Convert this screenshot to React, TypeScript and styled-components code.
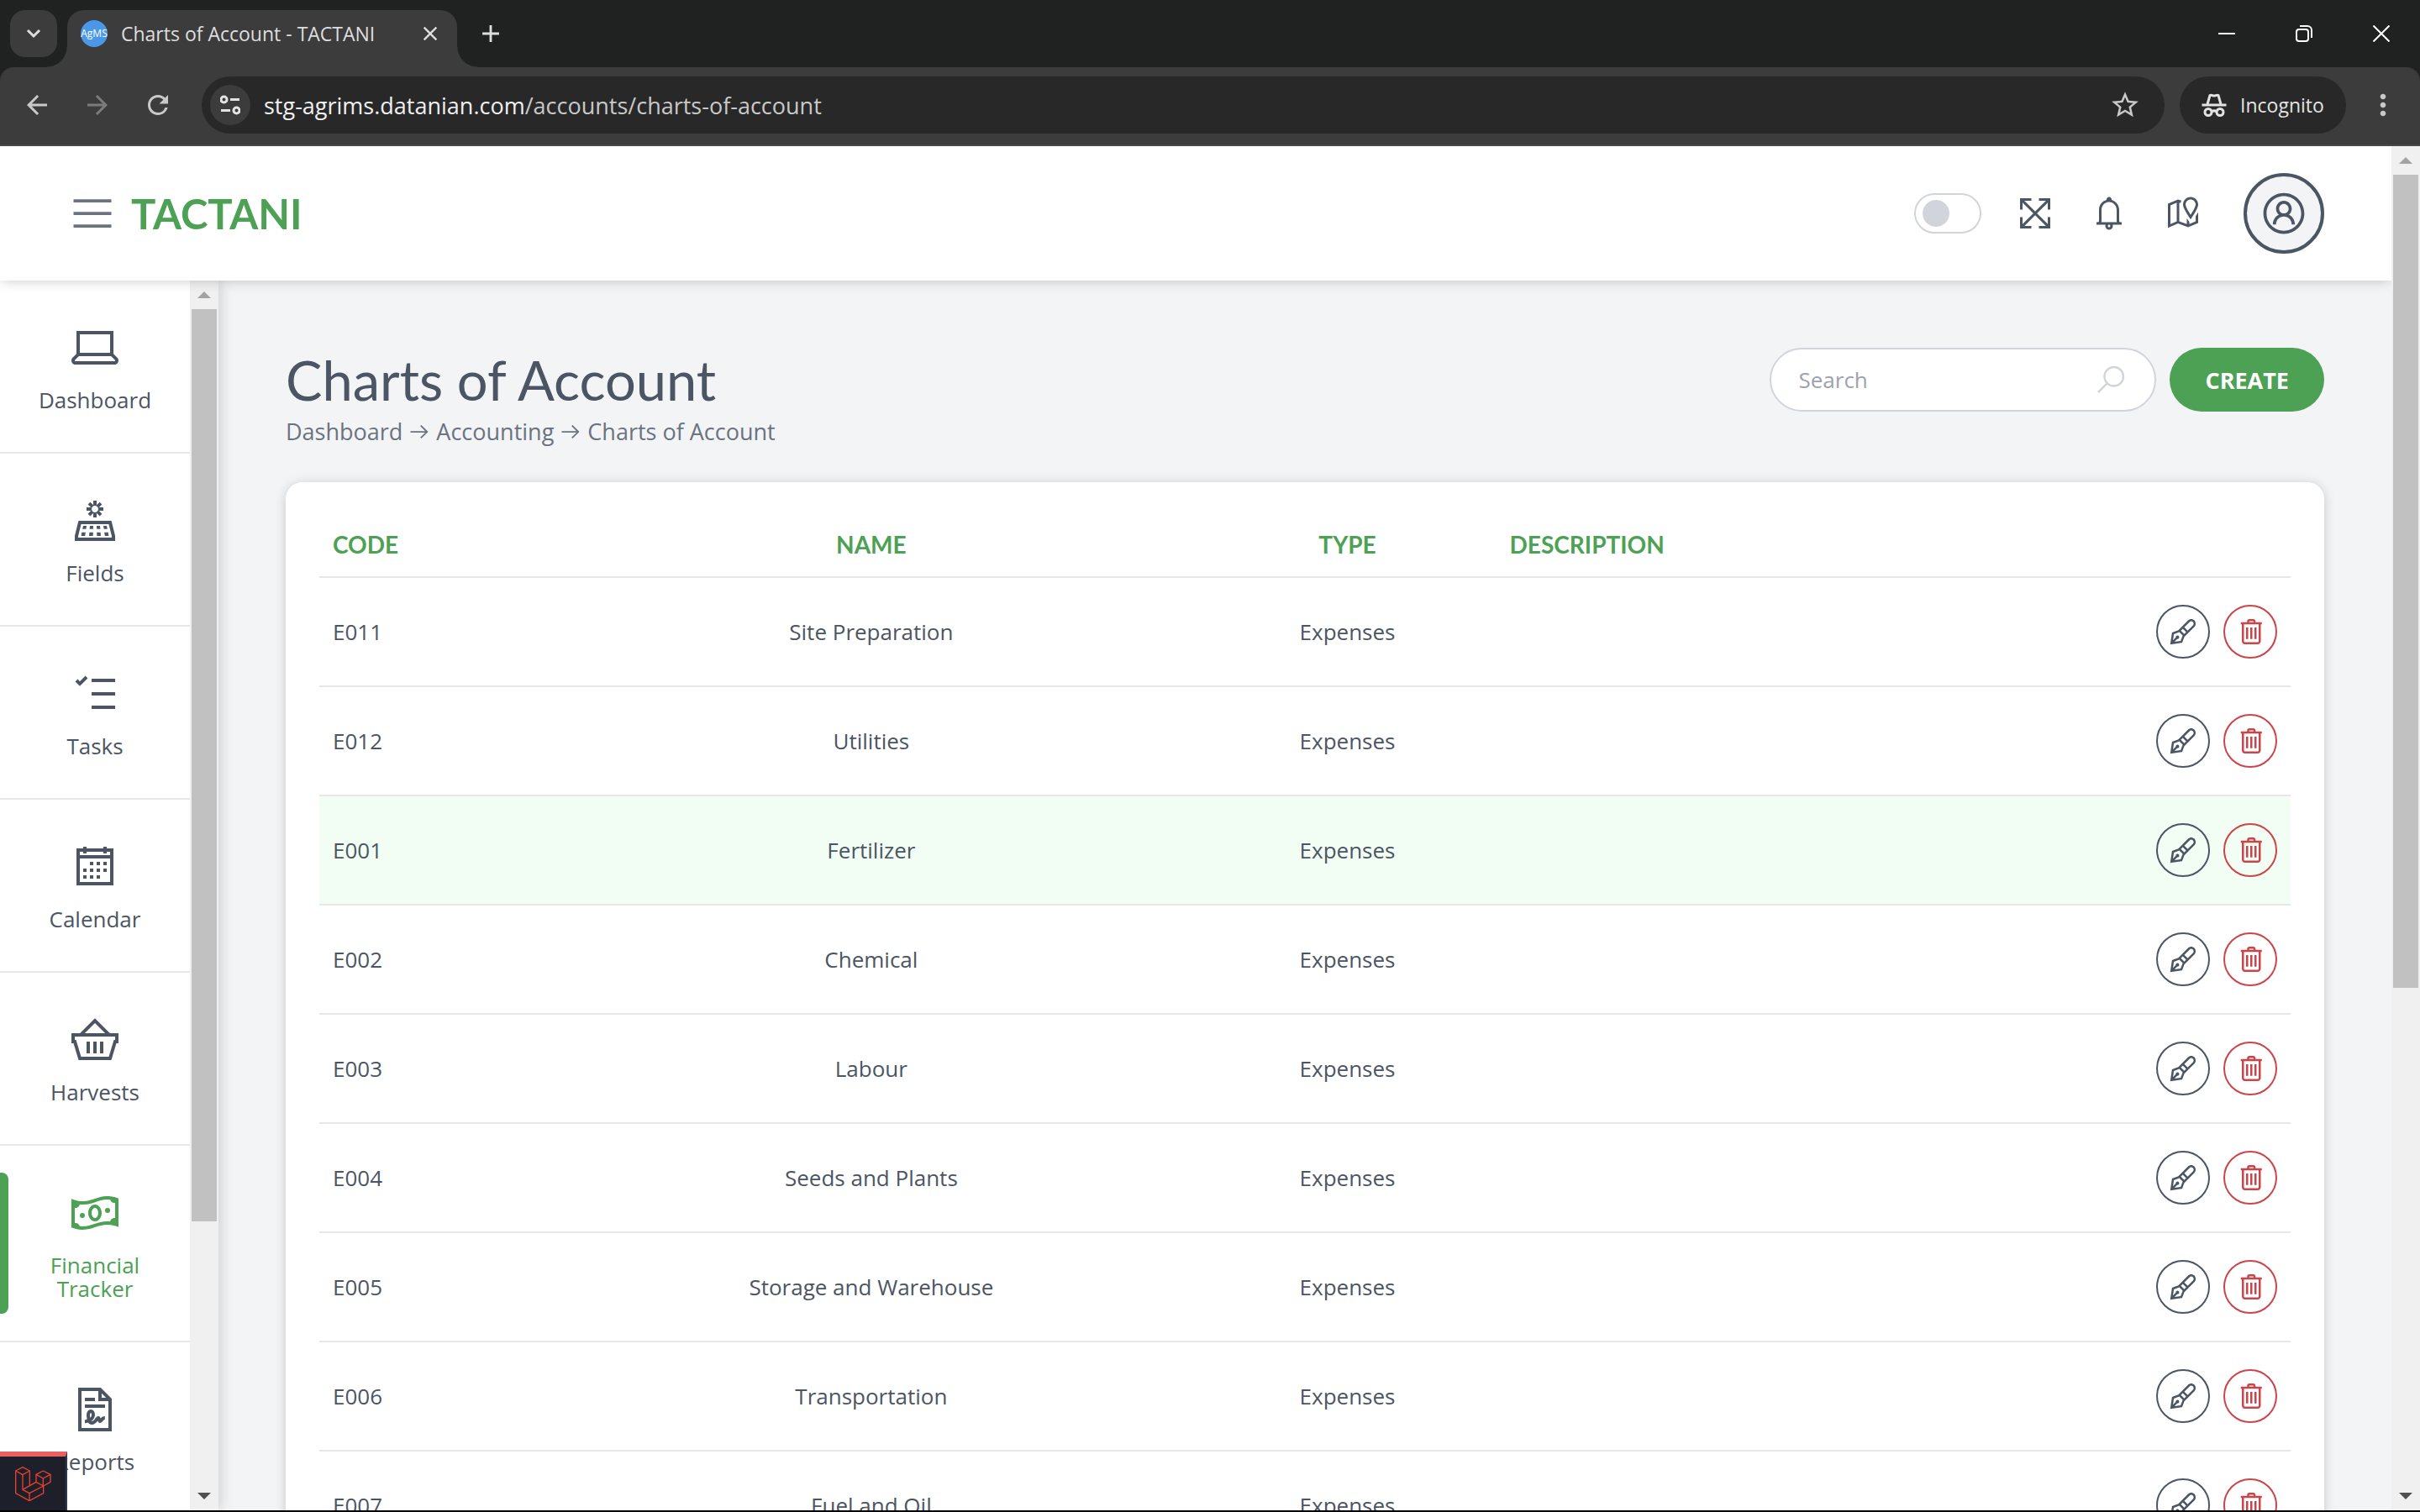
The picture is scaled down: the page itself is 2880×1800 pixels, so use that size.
import React from "react";
import styled, { createGlobalStyle, css } from "styled-components";
import {
  LiaArrowRightSolid,
  LiaBarsSolid,
  LiaBell,
  LiaCalendar,
  LiaExpandArrowsAltSolid,
  LiaFileContractSolid,
  LiaLaptopSolid,
  LiaMapMarkedSolid,
  LiaMoneyBillWaveSolid,
  LiaPenFancySolid,
  LiaSearchSolid,
  LiaShoppingBasketSolid,
  LiaSolarPanelSolid,
  LiaTasksSolid,
  LiaTrashAlt,
  LiaUserCircle,
} from "react-icons/lia";
import {
  MdAdd,
  MdArrowBack,
  MdArrowForward,
  MdClose,
  MdMoreVert,
  MdRefresh,
  MdStarBorder,
} from "react-icons/md";

const color = {
  green: "#4ca154",
  red: "#cb444a",
  ink: "#4b5563",
  muted: "#6b7280",
  placeholder: "#9ca3af",
  outline: "#d1d5db",
  line: "#e5e7eb",
  page: "#f3f4f6",
  strip: "#202221",
  toolbar: "#3c3c3c",
  field: "#282828",
};

const bodyFont = `"Open Sans", "Noto Sans", sans-serif`;
const displayFont = `Lato, "Open Sans", sans-serif`;

const GlobalStyle = createGlobalStyle`
  *, *::before, *::after { box-sizing: border-box; }
  body { margin: 0; font-family: ${bodyFont}; font-size: 26px; color: ${color.ink}; }
  button, input { font: inherit; color: inherit; margin: 0; }
  button { border: 0; padding: 0; background: none; cursor: pointer; }
  a { color: inherit; text-decoration: none; }
  svg { display: block; flex: none; }
`;

const Window = styled.div`
  display: flex;
  flex-direction: column;
  height: 100vh;
  overflow: hidden;
  border-bottom: 2px solid #000;
  background: ${color.page};
`;

/* ---------- browser frame ---------- */

const TabStrip = styled.div`
  display: flex;
  align-items: flex-end;
  height: 80px;
  padding-left: 12px;
  gap: 12px;
  background: ${color.strip};
  color: #dedede;
`;

const TabSearch = styled.button`
  display: grid;
  place-items: center;
  width: 56px;
  height: 56px;
  margin-bottom: 12px;
  border-radius: 18px;
  background: ${color.toolbar};
`;

const Tab = styled.div`
  position: relative;
  display: flex;
  align-items: center;
  width: 464px;
  height: 68px;
  padding: 0 18px 12px 16px;
  gap: 16px;
  border-radius: 20px 20px 0 0;
  background: ${color.toolbar};
  font-size: 23px;

  &::before,
  &::after {
    content: "";
    position: absolute;
    bottom: 0;
    width: 24px;
    height: 24px;
  }
  &::before {
    right: 100%;
    background: radial-gradient(circle at 0 0, transparent 23px, ${color.toolbar} 24px);
  }
  &::after {
    left: 100%;
    background: radial-gradient(circle at 100% 0, transparent 23px, ${color.toolbar} 24px);
  }
`;

const Favicon = styled.span`
  display: grid;
  place-items: center;
  width: 32px;
  height: 32px;
  border-radius: 50%;
  background: #4a98e8;
  color: #fff;
  font-size: 12px;
  line-height: 32px;
`;

const TabTitle = styled.span`
  flex: 1;
  white-space: nowrap;
`;

const StripButton = styled.button`
  display: grid;
  place-items: center;
  width: 56px;
  height: 56px;
  margin-bottom: 12px;
`;

const TabClose = styled.button`
  display: grid;
  place-items: center;
  width: 28px;
  height: 28px;
`;

const WindowControls = styled.div`
  display: flex;
  align-self: stretch;
  align-items: center;
  margin-left: auto;
  color: #fff;
`;

const WindowButton = styled.button`
  display: grid;
  place-items: center;
  width: 92px;
  height: 80px;
`;

const AddressBarBack = styled.div`
  background: ${color.strip};
`;

const AddressBar = styled.div`
  display: flex;
  align-items: center;
  height: 94px;
  padding: 0 24px 2px 8px;
  border-bottom: 2px solid #484848;
  border-radius: 16px 16px 0 0;
  background: ${color.toolbar};
  color: #c9c9c9;
`;

const NavButton = styled.button<{ $dim?: boolean }>`
  display: grid;
  place-items: center;
  width: 72px;
  height: 68px;
  opacity: ${(p) => (p.$dim ? 0.45 : 1)};
`;

const UrlField = styled.div`
  display: flex;
  flex: 1;
  align-items: center;
  height: 68px;
  margin: 0 18px 0 16px;
  padding: 0 28px 0 10px;
  gap: 16px;
  border-radius: 34px;
  background: ${color.field};
`;

const SiteInfo = styled.button`
  display: grid;
  place-items: center;
  width: 48px;
  height: 48px;
  border-radius: 50%;
  background: ${color.toolbar};
`;

const Url = styled.span`
  flex: 1;
  font-size: 27px;
  white-space: nowrap;
`;

const Host = styled.span`
  color: #f0f0f0;
`;

const Incognito = styled.button`
  display: flex;
  align-items: center;
  justify-content: center;
  width: 198px;
  height: 68px;
  gap: 16px;
  margin-right: 24px;
  border-radius: 34px;
  background: ${color.field};
  color: #e3e3e3;
  font-size: 23px;
`;

/* ---------- scroll bars ---------- */

const Rail = styled.div`
  display: flex;
  flex-direction: column;
  width: 34px;
  background: #f0f0f0;
`;

const RailArrow = styled.span<{ $down?: boolean }>`
  display: grid;
  place-items: center;
  height: 34px;

  &::before {
    content: "";
    width: 16px;
    height: 8px;
    background: ${(p) => (p.$down ? "#505050" : "#a3a3a3")};
    clip-path: ${(p) =>
      p.$down ? "polygon(0 0, 100% 0, 50% 100%)" : "polygon(50% 0, 100% 100%, 0 100%)"};
  }
`;

const RailTrack = styled.div`
  flex: 1;
  padding: 0 2px;
`;

const RailThumb = styled.div`
  background: #c1c1c1;
`;

function ScrollRail({ visible, total }: { visible: number; total: number }) {
  return (
    <Rail aria-hidden="true">
      <RailArrow />
      <RailTrack>
        <RailThumb style={{ height: `${(visible / total) * 100}%` }} />
      </RailTrack>
      <RailArrow $down />
    </Rail>
  );
}

/* ---------- page ---------- */

const Viewport = styled.div`
  display: flex;
  flex: 1;
  min-height: 0;
`;

const Page = styled.div`
  display: flex;
  flex: 1;
  flex-direction: column;
  min-width: 0;
  overflow: hidden;
`;

const Header = styled.header`
  position: relative;
  z-index: 3;
  display: flex;
  flex: none;
  align-items: center;
  height: 160px;
  padding: 0 80px;
  background: #fff;
  box-shadow: 0 2px 14px -2px rgba(0, 0, 0, 0.22);
`;

const MenuButton = styled.button`
  margin-right: 16px;
  color: ${color.muted};
`;

const Brand = styled.a`
  color: ${color.green};
  font-family: ${displayFont};
  font-size: 49px;
  font-weight: 700;
  line-height: 60px;
`;

const HeaderTools = styled.div`
  display: flex;
  align-items: center;
  gap: 40px;
  margin-left: auto;
`;

const ThemeToggle = styled.input`
  appearance: none;
  display: flex;
  align-items: center;
  width: 80px;
  height: 48px;
  padding: 0 8px;
  border: 2px solid ${color.outline};
  border-radius: 24px;
  background: #fff;

  &::before {
    content: "";
    width: 32px;
    height: 32px;
    border-radius: 50%;
    background: ${color.outline};
  }
`;

const ToolButton = styled.button`
  display: grid;
  place-items: center;
`;

const Avatar = styled.button`
  display: grid;
  place-items: center;
  width: 96px;
  height: 96px;
  margin-left: 8px;
  border: 4px solid ${color.ink};
  border-radius: 50%;
  background: ${color.page};
`;

const Columns = styled.div`
  display: flex;
  flex: 1;
  min-height: 0;
`;

const Sidebar = styled.aside`
  position: relative;
  z-index: 2;
  display: flex;
  flex: none;
  width: 260px;
  background: #fff;
  box-shadow: 0 0 18px rgba(0, 0, 0, 0.2);
`;

const Menu = styled.nav`
  flex: 1;
  overflow: hidden;
`;

const MenuLink = styled.a<{ $active?: boolean }>`
  position: relative;
  display: flex;
  flex-direction: column;
  align-items: center;
  gap: 16px;
  padding: 48px 32px;
  border-bottom: 2px solid ${color.line};
  line-height: 28px;
  text-align: center;

  ${(p) =>
    p.$active &&
    css`
      color: ${color.green};

      &::before {
        content: "";
        position: absolute;
        top: 32px;
        bottom: 32px;
        left: 0;
        width: 10px;
        border-radius: 0 8px 8px 0;
        background: ${color.green};
      }
    `}
`;

const Main = styled.main`
  flex: 1;
  min-width: 0;
  padding: 80px 80px 0;
  overflow: hidden;
`;

const TitleBar = styled.div`
  display: flex;
  align-items: flex-start;
  justify-content: space-between;
  margin-bottom: 40px;
`;

const Title = styled.h1`
  margin: 0 0 4px;
  font-family: ${displayFont};
  font-size: 65px;
  font-weight: 400;
  line-height: 76px;
`;

const Crumbs = styled.nav`
  display: flex;
  align-items: center;
  gap: 6px;
  color: ${color.muted};
  font-size: 27px;
  line-height: 40px;
`;

const Actions = styled.div`
  display: flex;
  gap: 16px;
`;

const SearchBox = styled.label`
  display: flex;
  align-items: center;
  width: 460px;
  height: 76px;
  padding: 0 32px;
  border: 2px solid ${color.outline};
  border-radius: 38px;
  background: #fff;
  color: ${color.outline};
`;

const SearchInput = styled.input`
  flex: 1;
  min-width: 0;
  padding: 0;
  border: 0;
  outline: 0;
  background: none;
  color: ${color.ink};

  &::placeholder {
    color: ${color.placeholder};
    opacity: 1;
  }
`;

const CreateButton = styled.button`
  height: 76px;
  padding: 0 42px;
  border-radius: 38px;
  background: ${color.green};
  color: #fff;
  font-size: 27px;
  font-weight: 700;
`;

const Card = styled.section`
  padding: 40px;
  border-radius: 20px;
  background: #fff;
  box-shadow: 0 2px 14px rgba(0, 0, 0, 0.18);
`;

const Table = styled.table`
  width: 100%;
  table-layout: fixed;
  border-collapse: separate;
  border-spacing: 0;
`;

const Col = styled.col<{ $width?: string }>`
  width: ${(p) => p.$width ?? "auto"};
`;

const Th = styled.th<{ $left?: boolean }>`
  padding: 14px 16px 18px;
  border-bottom: 2px solid ${color.line};
  color: ${color.green};
  font-family: ${displayFont};
  font-size: 28px;
  font-weight: 700;
  line-height: 40px;
  text-align: ${(p) => (p.$left ? "left" : "center")};
`;

const Td = styled.td<{ $left?: boolean }>`
  padding: 32px 16px;
  border-bottom: 2px solid ${color.line};
  line-height: 40px;
  text-align: ${(p) => (p.$left ? "left" : "center")};
`;

const Tr = styled.tr<{ $highlighted?: boolean }>`
  background: ${(p) => (p.$highlighted ? "#f2fdf4" : "transparent")};
`;

const RowActions = styled.div`
  display: flex;
  justify-content: flex-end;
  gap: 16px;
`;

const RoundButton = styled.button<{ $danger?: boolean }>`
  display: grid;
  place-items: center;
  width: 64px;
  height: 64px;
  border: 2px solid currentColor;
  border-radius: 50%;
  color: ${(p) => (p.$danger ? color.red : color.ink)};
`;

const DebugBadge = styled.button`
  position: absolute;
  bottom: 2px;
  left: 0;
  z-index: 4;
  display: grid;
  place-items: center;
  width: 80px;
  height: 70px;
  border-top: 6px solid #eb5f60;
  border-right: 2px solid #2d3748;
  background: #1d202b;
`;

/* ---------- drawings ---------- */

const ChevronIcon = () => (
  <svg width="18" height="12" viewBox="0 0 18 12" fill="none" stroke="currentColor" strokeWidth="3">
    <path d="M2 2l7 7 7-7" />
  </svg>
);

const MinimizeIcon = () => (
  <svg width="20" height="20" viewBox="0 0 20 20" stroke="currentColor" strokeWidth="2">
    <path d="M0 10h20" />
  </svg>
);

const RestoreIcon = () => (
  <svg width="20" height="20" viewBox="0 0 20 20" fill="none" stroke="currentColor" strokeWidth="2">
    <rect x="1" y="5" width="14" height="14" rx="3" />
    <path d="M5 1h9a5 5 0 0 1 5 5v9" />
  </svg>
);

const CloseWindowIcon = () => (
  <svg width="20" height="20" viewBox="0 0 20 20" fill="none" stroke="currentColor" strokeWidth="2">
    <path d="M0.500 0.500l19 19M19.500 0.500l-19 19" />
  </svg>
);

const SiteInfoIcon = () => (
  <svg width="24" height="24" viewBox="0 0 24 24" fill="none" stroke="#e3e3e3" strokeWidth="3">
    <circle cx="4.500" cy="5.500" r="3.500" />
    <path d="M12 5.500h11M1 18.500h11" />
    <circle cx="19.500" cy="18.500" r="3.500" />
  </svg>
);

const IncognitoIcon = () => (
  <svg width="30" height="28" viewBox="0 0 30 28" fill="none" stroke="currentColor" strokeWidth="3">
    <path d="M7 13L10 2.500C12 1.500 13 3 15 3S18 1.500 20 2.500L23 13" />
    <path d="M0.500 14h29" />
    <circle cx="8" cy="22.500" r="4" />
    <circle cx="22" cy="22.500" r="4" />
    <path d="M12 22c2-1.500 4-1.500 6 0" />
  </svg>
);

const LaravelIcon = () => (
  <svg
    width="44"
    height="42"
    viewBox="0 0 132 126"
    fill="none"
    stroke="#e5422f"
    strokeWidth="4"
    strokeLinejoin="round"
  >
    <path d="M30 5L55 18L30 32L5 18Z" />
    <path d="M5 18V98L54 125L104 98V72L54 98L30 85V32" />
    <path d="M54 98V125M55 18V71M30 85L78 58" />
    <path d="M103 18L129 31L103 45L78 31Z" />
    <path d="M78 31V58L104 72L129 58V31M103 45V72" />
  </svg>
);

/* ---------- content ---------- */

const menu = [
  { label: "Dashboard", icon: LiaLaptopSolid },
  { label: "Fields", icon: LiaSolarPanelSolid },
  { label: "Tasks", icon: LiaTasksSolid },
  { label: "Calendar", icon: LiaCalendar },
  { label: "Harvests", icon: LiaShoppingBasketSolid },
  { label: "Financial Tracker", icon: LiaMoneyBillWaveSolid, active: true },
  { label: "Reports", icon: LiaFileContractSolid },
];

const accounts = [
  { code: "E011", name: "Site Preparation" },
  { code: "E012", name: "Utilities" },
  { code: "E001", name: "Fertilizer", highlighted: true },
  { code: "E002", name: "Chemical" },
  { code: "E003", name: "Labour" },
  { code: "E004", name: "Seeds and Plants" },
  { code: "E005", name: "Storage and Warehouse" },
  { code: "E006", name: "Transportation" },
  { code: "E007", name: "Fuel and Oil" },
];

function BrowserFrame() {
  return (
    <>
      <TabStrip>
        <TabSearch aria-label="Search tabs">
          <ChevronIcon />
        </TabSearch>
        <Tab>
          <Favicon>AgMS</Favicon>
          <TabTitle>Charts of Account - TACTANI</TabTitle>
          <TabClose aria-label="Close tab">
            <MdClose size={28} />
          </TabClose>
        </Tab>
        <StripButton aria-label="New tab">
          <MdAdd size={34} />
        </StripButton>
        <WindowControls>
          <WindowButton aria-label="Minimize">
            <MinimizeIcon />
          </WindowButton>
          <WindowButton aria-label="Restore">
            <RestoreIcon />
          </WindowButton>
          <WindowButton aria-label="Close window">
            <CloseWindowIcon />
          </WindowButton>
        </WindowControls>
      </TabStrip>
      <AddressBarBack>
        <AddressBar>
          <NavButton aria-label="Back">
            <MdArrowBack size={36} />
          </NavButton>
          <NavButton aria-label="Forward" $dim>
            <MdArrowForward size={36} />
          </NavButton>
          <NavButton aria-label="Reload">
            <MdRefresh size={36} />
          </NavButton>
          <UrlField>
            <SiteInfo aria-label="Site information">
              <SiteInfoIcon />
            </SiteInfo>
            <Url>
              <Host>stg-agrims.datanian.com</Host>/accounts/charts-of-account
            </Url>
            <MdStarBorder size={38} />
          </UrlField>
          <Incognito>
            <IncognitoIcon />
            Incognito
          </Incognito>
          <MdMoreVert size={40} />
        </AddressBar>
      </AddressBarBack>
    </>
  );
}

function AccountsTable() {
  return (
    <Table>
      <colgroup>
        <Col $width="7%" />
        <Col $width="42%" />
        <Col $width="148px" />
        <Col $width="18%" />
        <Col />
      </colgroup>
      <thead>
        <tr>
          <Th $left>CODE</Th>
          <Th>NAME</Th>
          <Th>TYPE</Th>
          <Th>DESCRIPTION</Th>
          <Th aria-label="Actions" />
        </tr>
      </thead>
      <tbody>
        {accounts.map((account) => (
          <Tr key={account.code} $highlighted={account.highlighted}>
            <Td $left>{account.code}</Td>
            <Td>{account.name}</Td>
            <Td>Expenses</Td>
            <Td />
            <Td>
              <RowActions>
                <RoundButton aria-label={`Edit ${account.name}`}>
                  <LiaPenFancySolid size={40} />
                </RoundButton>
                <RoundButton aria-label={`Delete ${account.name}`} $danger>
                  <LiaTrashAlt size={40} />
                </RoundButton>
              </RowActions>
            </Td>
          </Tr>
        ))}
      </tbody>
    </Table>
  );
}

export default function App() {
  return (
    <Window>
      <GlobalStyle />
      <BrowserFrame />
      <Viewport>
        <Page>
          <Header>
            <MenuButton aria-label="Toggle menu">
              <LiaBarsSolid size={60} />
            </MenuButton>
            <Brand href="#">TACTANI</Brand>
            <HeaderTools>
              <ThemeToggle type="checkbox" aria-label="Dark mode" />
              <ToolButton aria-label="Full screen">
                <LiaExpandArrowsAltSolid size={48} />
              </ToolButton>
              <ToolButton aria-label="Notifications">
                <LiaBell size={48} />
              </ToolButton>
              <ToolButton aria-label="Map">
                <LiaMapMarkedSolid size={48} />
              </ToolButton>
              <Avatar aria-label="Account">
                <LiaUserCircle size={60} />
              </Avatar>
            </HeaderTools>
          </Header>
          <Columns>
            <Sidebar>
              <Menu>
                {menu.map(({ label, icon: Icon, active }) => (
                  <MenuLink key={label} href="#" $active={active}>
                    <Icon size={64} />
                    {label}
                  </MenuLink>
                ))}
              </Menu>
              <ScrollRail visible={1464} total={1882} />
            </Sidebar>
            <Main>
              <TitleBar>
                <div>
                  <Title>Charts of Account</Title>
                  <Crumbs aria-label="Breadcrumb">
                    <a href="#">Dashboard</a>
                    <LiaArrowRightSolid size={28} />
                    <a href="#">Accounting</a>
                    <LiaArrowRightSolid size={28} />
                    <span>Charts of Account</span>
                  </Crumbs>
                </div>
                <Actions>
                  <SearchBox>
                    <SearchInput type="text" placeholder="Search" aria-label="Search" />
                    <LiaSearchSolid size={40} />
                  </SearchBox>
                  <CreateButton>CREATE</CreateButton>
                </Actions>
              </TitleBar>
              <Card>
                <AccountsTable />
              </Card>
            </Main>
          </Columns>
        </Page>
        <ScrollRail visible={1624} total={2610} />
      </Viewport>
      <DebugBadge aria-label="Debug bar">
        <LaravelIcon />
      </DebugBadge>
    </Window>
  );
}
